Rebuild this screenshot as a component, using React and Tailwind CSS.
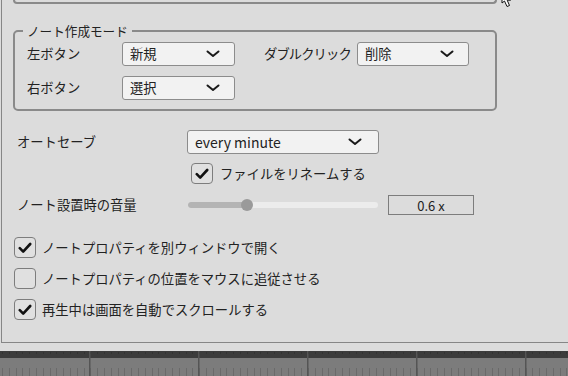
import React from "react";

const Chevron = () => (
  <svg width="14" height="8" viewBox="0 0 14 8" className="shrink-0">
    <path d="M1.5 1.5 L7 6 L12.5 1.5" fill="none" stroke="#1a1a1a" strokeWidth="2" strokeLinecap="round" strokeLinejoin="round" />
  </svg>
);

const Select = ({ value, w, pr = "pr-[14px]", latin = false }) => (
  <div className={`${w} h-[24px] flex items-center justify-between pl-[7px] ${pr} bg-[#f2f2f2] border border-[#8c8c8c] rounded-[3px]`}>
    <span className={latin ? "leading-none text-[14px]" : "leading-none"}>{value}</span>
    <Chevron />
  </div>
);

const Check = ({ checked }) => (
  <div className="w-[22px] h-[21px] flex items-center justify-center border border-[#7d7d7d] rounded-[4px] bg-[#e0e0e0] shrink-0">
    {checked && (
      <svg width="14" height="12" viewBox="0 0 14 12">
        <path d="M1.8 6.2 L5.2 9.6 L12.2 2" fill="none" stroke="#111" strokeWidth="2.6" strokeLinecap="round" strokeLinejoin="round" />
      </svg>
    )}
  </div>
);

const Timeline = () => {
  const minor = [];
  for (let x = 2; x < 568; x += 6.8) minor.push(Math.round(x));
  const major = [89, 198, 307, 416, 525];
  return (
    <svg width="568" height="25" viewBox="0 0 568 25" className="block">
      <rect x="0" y="0" width="568" height="7" fill="#3c3c3c" />
      <rect x="0" y="7" width="568" height="18" fill="#7c7c7c" />
      {minor.map((x, i) => (
        <g key={i}>
          <rect x={x} y="1" width="1" height="2" fill="#333" />
          <rect x={x} y="17" width="1" height="8" fill="#6a6a6a" />
        </g>
      ))}
      {major.map((x) => (
        <rect key={x} x={x} y="0" width="1.5" height="25" fill="#555555" />
      ))}
    </svg>
  );
};

export default function App() {
  return (
    <div className="w-[568px] h-[376px] bg-[#dcdcdc] overflow-hidden relative text-[13.3px] text-[#222] font-['Noto_Sans_CJK_JP',sans-serif]">
      <div className="ml-[1px] h-[343px] border-l border-b border-[#868686] pl-[11px]">
        <div className="w-[484px] h-[4px] border-2 border-t-0 border-[#8a8a8a] rounded-b-[5px]" />
        <fieldset className="mt-[18px] w-[484px] h-[89px] border-2 border-[#8a8a8a] rounded-[5px] pl-[12px]">
          <legend className="-ml-[4px] px-[4px] leading-[18px] text-[12.6px]">ノート作成モード</legend>
          <div className="flex items-center mt-[2px]">
            <span className="w-[95px] whitespace-nowrap">左ボタン</span>
            <Select value="新規" w="w-[113px]" />
            <span className="ml-[29px] w-[93px] whitespace-nowrap tracking-[-0.9px]">ダブルクリック</span>
            <Select value="削除" w="w-[112px]" />
          </div>
          <div className="flex items-center mt-[10px]">
            <span className="w-[95px] whitespace-nowrap">右ボタン</span>
            <Select value="選択" w="w-[113px]" />
          </div>
        </fieldset>
        <div className="-ml-[11px] pl-[15px]">
          <div className="flex items-center mt-[19px]">
            <span className="w-[170px]">オートセーブ</span>
            <Select value="every minute" w="w-[192px]" pr="pr-[16px]" latin />
          </div>
          <div className="flex items-center mt-[9px] ml-[174px] gap-[7px]">
            <Check checked />
            <span>ファイルをリネームする</span>
          </div>
          <div className="flex items-center mt-[11px]">
            <span className="w-[171px] leading-[20px]">ノート設置時の音量</span>
            <div className="w-[190px] h-[20px] relative flex items-center">
              <div className="w-full h-[6px] rounded-full bg-[#ececec] flex">
                <div className="w-[60px] h-full rounded-full bg-[#b4b4b4]" />
              </div>
              <div className="absolute left-[53px] top-[4px] w-[12px] h-[12px] rounded-full bg-[#9a9a9a]" />
            </div>
            <div className="ml-[10px] w-[86px] h-[20px] border border-[#7d7d7d] flex items-center justify-center leading-none text-[13px]">0.6 x</div>
          </div>
          <div className="flex flex-col gap-[10px] mt-[22px] -ml-[3px]">
            <div className="flex items-center gap-[6px]">
              <Check checked />
              <span>ノートプロパティを別ウィンドウで開く</span>
            </div>
            <div className="flex items-center gap-[6px]">
              <Check />
              <span>ノートプロパティの位置をマウスに追従させる</span>
            </div>
            <div className="flex items-center gap-[6px]">
              <Check checked />
              <span>再生中は画面を自動でスクロールする</span>
            </div>
          </div>
        </div>
      </div>
      <div className="h-[8px]" />
      <Timeline />
      <svg width="14" height="10" viewBox="0 0 14 10" className="absolute left-[501px] top-0">
        <path d="M1 -6 L1 3 L3.5 1 L6 6.5 L8.5 5.5 L6.2 0.2 L9.5 0.2 Z" fill="#fff" stroke="#111" strokeWidth="1" strokeLinejoin="round" />
      </svg>
    </div>
  );
}
